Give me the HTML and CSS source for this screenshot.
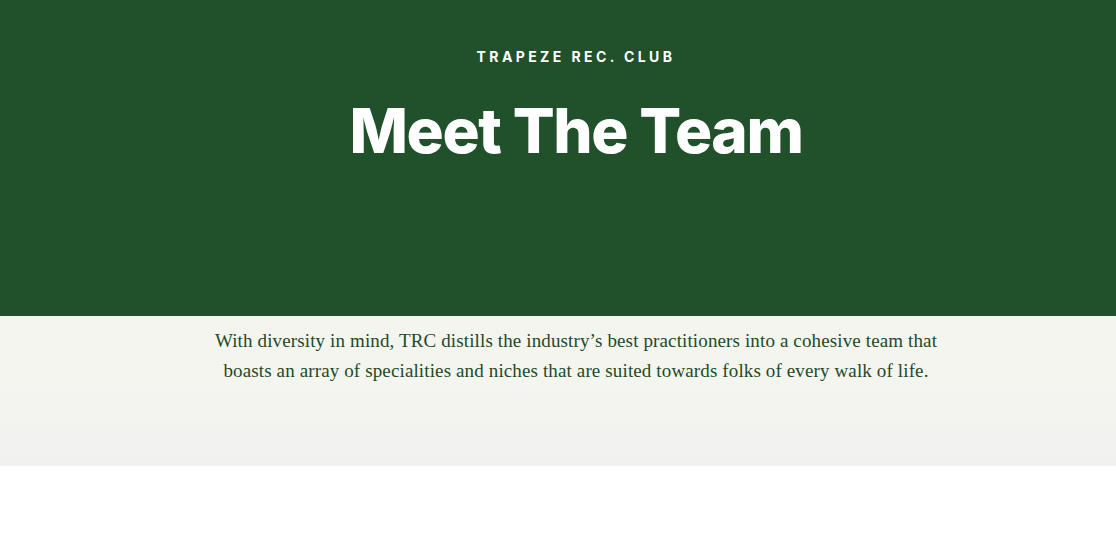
FILE: index.html
```html
<!DOCTYPE html>
<html lang="en">
<head>
<meta charset="utf-8">
<title>Meet The Team</title>
<link rel="stylesheet" href="styles.css">
</head>
<body>
<header class="hero">
  <p class="eyebrow">TRAPEZE REC. CLUB</p>
  <h1 class="title">Meet The Team</h1>
</header>
<section class="intro">
  <p class="intro-text">With diversity in mind, TRC distills the industry’s best practitioners into a cohesive team that boasts an array of specialities and niches that are suited towards folks of every walk of life.</p>
</section>
</body>
</html>
```
FILE: styles.css
```css
* { box-sizing: border-box; }
html, body { margin: 0; padding: 0; background: #ffffff; }
.hero {
  background: #20512a;
  height: 316px;
  display: flex;
  flex-direction: column;
  align-items: center;
  padding-top: 48px;
  padding-left: 36px;
}
.eyebrow {
  margin: 0;
  font-family: Inter, "Noto Sans", sans-serif;
  font-weight: 700;
  font-size: 14px;
  line-height: 18px;
  letter-spacing: 3.4px;
  color: #ffffff;
}
.title {
  margin: 29px 0 0;
  font-family: Inter, "Noto Sans", sans-serif;
  font-weight: 800;
  font-size: 62px;
  line-height: 72px;
  letter-spacing: -1.4px;
  color: #ffffff;
}
.intro {
  height: 150px;
  background: linear-gradient(to bottom, #f4f5ef 0%, #f4f5ef 45%, #f1f1f1 100%);
  display: flex;
  justify-content: center;
  padding-top: 10px;
  padding-left: 36px;
}
.intro-text {
  margin: 0;
  width: 750px;
  text-align: center;
  font-family: "Liberation Serif", "Times New Roman", serif;
  font-size: 19px;
  line-height: 30px;
  letter-spacing: 0.13px;
  color: #1d4a28;
}
```
